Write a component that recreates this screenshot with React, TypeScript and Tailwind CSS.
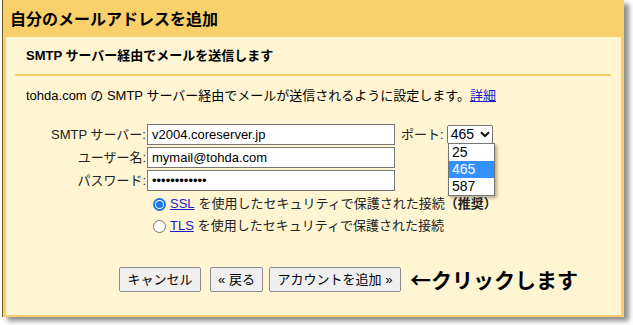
import React from "react";

const font = "font-['Liberation_Sans','Noto_Sans_CJK_JP',sans-serif]";

function Radio({ checked }: { checked: boolean }) {
  return checked ? (
    <span className="w-[13px] h-[13px] rounded-full bg-[#1a73e8] flex items-center justify-center">
      <span className="w-[9px] h-[9px] rounded-full bg-white flex items-center justify-center">
        <span className="w-[7px] h-[7px] rounded-full bg-[#1a73e8]" />
      </span>
    </span>
  ) : (
    <span className="w-[13px] h-[13px] rounded-full border border-[#767676] bg-white" />
  );
}

export default function App() {
  return (
    <div className={`w-[633px] h-[325px] bg-white text-black relative overflow-hidden ${font}`}>
      <div className="ml-[2px] w-[622px] h-[317px] border-l border-[#6b5a28] shadow-[5px_4px_5px_rgba(0,0,0,0.45)]">
        <div className="h-full flex flex-col border-x-[3px] border-b-[2px] border-[#f8cf6b] bg-[#fff5d3]">
          <div className="h-[37px] bg-[#f9d06a] flex items-center pt-[2px] text-[16px] font-bold -mx-[3px] px-[7px]">
            自分のメールアドレスを追加
          </div>
          <div className="h-[37px] flex items-center pl-[20px] text-[13px] font-bold">
            SMTP サーバー経由でメールを送信します
          </div>
          <div className="h-[2px] ml-[9px] mr-[10px] bg-[#f7cd68]" />
          <div className="h-[40px] flex items-center pl-[20px] text-[13px]">
            <span>
              tohda.com の SMTP サーバー経由でメールが送信されるように設定します。
              <span className="text-[#1a1ac8] underline">詳細</span>
            </span>
          </div>
          <div className="mt-[8px] flex flex-col gap-[2px] text-[13px]">
            <div className="flex items-center h-[21px]">
              <span className="w-[140px] text-right text-[#222]">SMTP サーバー:</span>
              <div className="ml-[1px] w-[248px] h-[21px] border border-[#767676] bg-white flex items-center pl-[4px] text-[13px]">
                v2004.coreserver.jp
              </div>
              <span className="ml-[6px] text-[#222]">ポート:</span>
              <div className="ml-[3px] w-[46px] h-[19px] border border-[#767676] rounded-[2px] bg-white flex items-center pl-[3px] text-[14px]">
                <span>465</span>
                <svg className="ml-[6px]" width="10" height="7" viewBox="0 0 10 7">
                  <path d="M1 1.2 L5 5 L9 1.2" fill="none" stroke="#111" strokeWidth="2" />
                </svg>
              </div>
            </div>
            <div className="flex items-center h-[21px]">
              <span className="w-[140px] text-right text-[#222]">ユーザー名:</span>
              <div className="ml-[1px] w-[248px] h-[21px] border border-[#767676] bg-white flex items-center pl-[4px]">
                mymail@tohda.com
              </div>
            </div>
            <div className="flex items-center h-[21px]">
              <span className="w-[140px] text-right text-[#222]">パスワード:</span>
              <div className="ml-[1px] w-[248px] h-[21px] border border-[#767676] bg-white flex items-center pl-[4px] text-[13px]">
                ••••••••••••
              </div>
            </div>
          </div>
          <div className="mt-[2px] flex flex-col text-[13px] text-[#222]">
            <div className="h-[22px] flex items-center pl-[147px]">
              <Radio checked />
              <span className="ml-[4px] text-[#1a1ac8] underline">SSL</span>
              <span className="ml-[4px]">を使用したセキュリティで保護された接続</span>
              <span className="font-bold">（推奨）</span>
            </div>
            <div className="h-[22px] flex items-center pl-[147px]">
              <Radio checked={false} />
              <span className="ml-[4px] text-[#1a1ac8] underline">TLS</span>
              <span className="ml-[4px]">を使用したセキュリティで保護された接続</span>
            </div>
          </div>
          <div className="mt-[27px] flex items-center pl-[113px] text-[13px]">
            <div className="w-[82px] h-[25px] border border-[#8a8a8a] rounded-[2px] bg-[#efefef] flex items-center justify-center">
              キャンセル
            </div>
            <div className="ml-[9px] w-[53px] h-[25px] border border-[#8a8a8a] rounded-[2px] bg-[#efefef] flex items-center justify-center">
              « 戻る
            </div>
            <div className="ml-[6px] w-[132px] h-[25px] border border-[#8a8a8a] rounded-[2px] bg-[#efefef] flex items-center justify-center">
              アカウントを追加 »
            </div>
            <span className="ml-[9px] text-[21px] font-bold font-['Noto_Sans_CJK_JP',sans-serif]">←クリックします</span>
          </div>
        </div>
      </div>
      <div className="absolute left-[448px] top-[143px] w-[47px] border border-[#767676] bg-white shadow-[2px_2px_3px_rgba(0,0,0,0.3)] text-[14px] flex flex-col">
        <div className="h-[17px] flex items-center pl-[3px]">25</div>
        <div className="h-[17px] flex items-center pl-[3px] bg-[#3390ff] text-white">465</div>
        <div className="h-[17px] flex items-center pl-[3px]">587</div>
      </div>
    </div>
  );
}
